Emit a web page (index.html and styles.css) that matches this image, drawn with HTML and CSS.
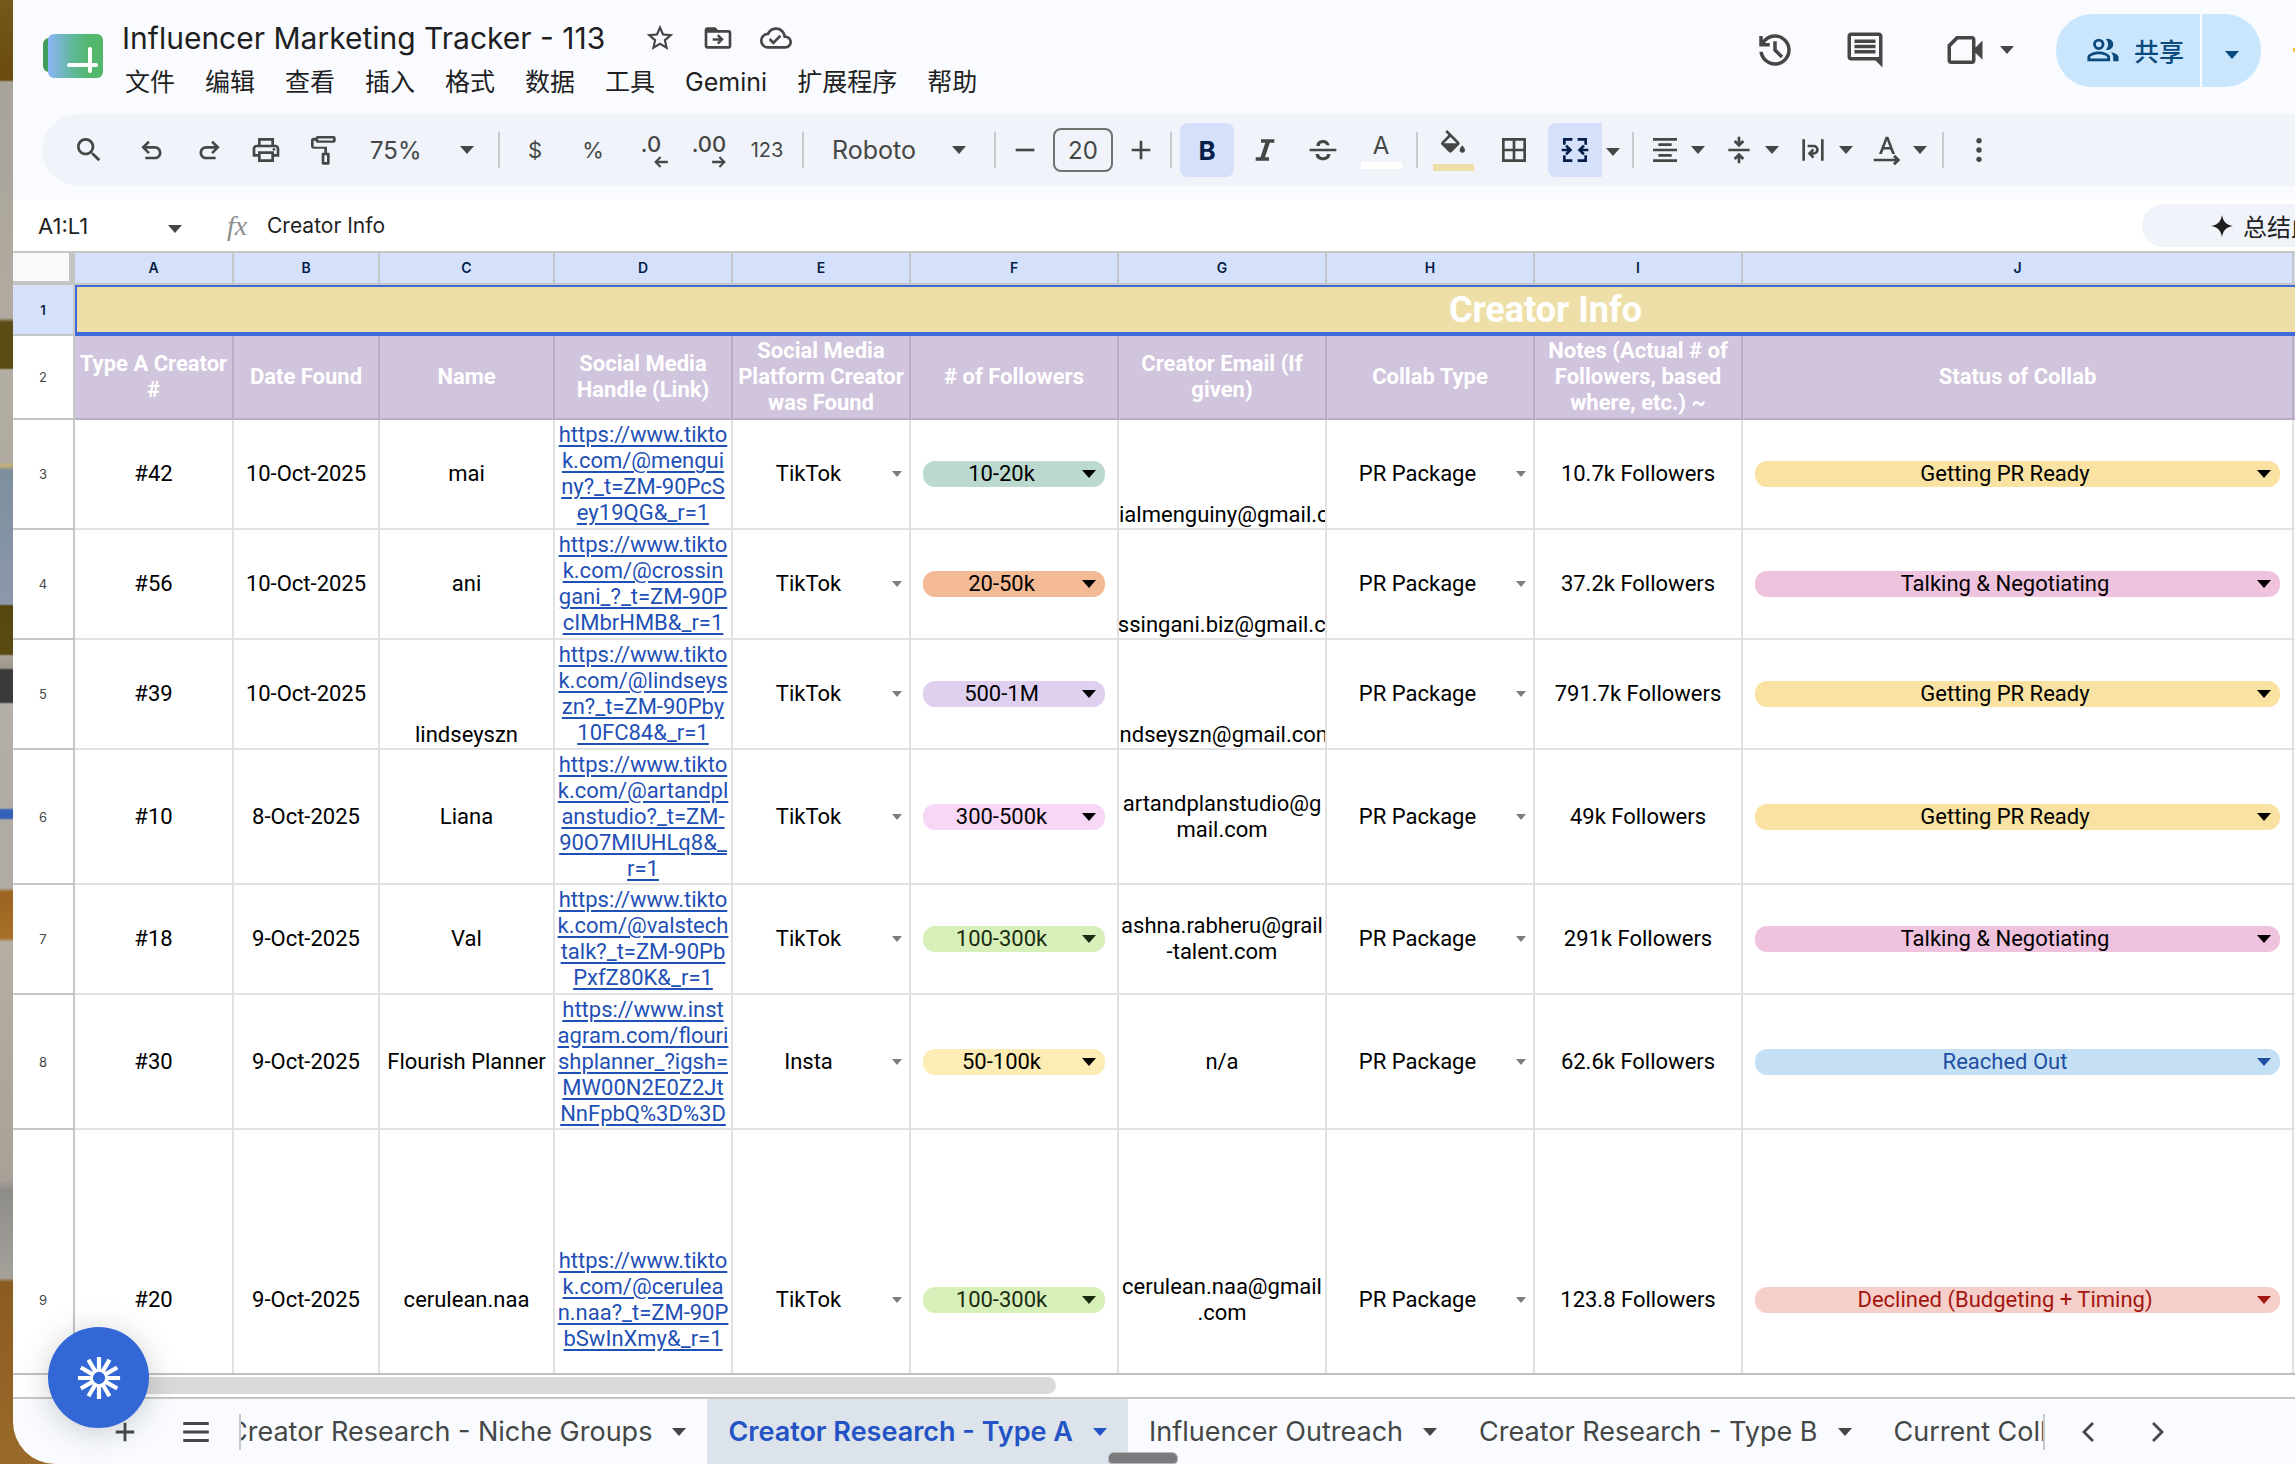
FILE: index.html
```html
<!DOCTYPE html>
<html lang="zh-CN">
<head>
    <meta charset="UTF-8">
    <meta name="viewport" content="width=device-width, initial-scale=1.0">
    <title>Influencer Marketing Tracker - 113</title>
    <link rel="stylesheet" href="styles.css">
</head>
<body>
    <div class="desktop">
    <div class="window">
        <header class="header">
            <svg class="logo" viewBox="0 0 60 44" aria-hidden="true">
                <defs>
                    <linearGradient id="logo-fill" x1="0" x2="1" y1="0" y2="0">
                        <stop offset="0" stop-color="#8ab4f8"/>
                        <stop offset="0.5" stop-color="#5cb88f"/>
                        <stop offset="0.75" stop-color="#53b86c"/>
                    </linearGradient>
                </defs>
                <rect x="0" y="4" width="30" height="34" rx="6" fill="#3f9c5c"/>
                <rect x="5" y="0" width="55" height="44" rx="6" fill="url(#logo-fill)"/>
                <path d="M26 31H53M47 15V37" stroke="#fff" stroke-width="4" stroke-linecap="round"/>
            </svg>
            <div class="title-block">
                <div class="title-row">
                    <h1>Influencer Marketing Tracker - 113</h1>
                    <button class="title-btn" aria-label="Star"><svg viewBox="0 0 24 24"><path d="M22 9.24l-7.19-.62L12 2 9.19 8.63 2 9.24l5.46 4.73L5.82 21 12 17.27 18.18 21l-1.63-7.03L22 9.24zM12 15.4l-3.76 2.27 1-4.28-3.32-2.88 4.38-.38L12 6.1l1.71 4.04 4.38.38-3.32 2.88 1 4.28L12 15.4z"/></svg></button>
                    <button class="title-btn" aria-label="Move"><svg viewBox="0 0 24 24"><path d="M20 6h-8l-2-2H4c-1.1 0-2 .9-2 2v12c0 1.100.9 2 2 2h16c1.100 0 2-.9 2-2V8c0-1.100-.9-2-2-2zm0 12H4V8h16zM12.500 9.200L11.200 10.500l1.600 1.600H8V14h4.800l-1.600 1.600 1.300 1.300L16.300 13z"/></svg></button>
                    <button class="title-btn" aria-label="Saved"><svg viewBox="0 0 24 24"><path d="M19.350 10.040C18.670 6.590 15.640 4 12 4 9.110 4 6.600 5.640 5.350 8.040 2.340 8.360 0 10.910 0 14c0 3.310 2.690 6 6 6h13c2.760 0 5-2.240 5-5 0-2.640-2.050-4.780-4.650-4.960zM19 18H6c-2.210 0-4-1.790-4-4 0-2.050 1.530-3.760 3.560-3.970l1.070-.11.5-.95C8.080 7.140 9.940 6 12 6c2.620 0 4.880 1.860 5.390 4.430l.3 1.500 1.530.11c1.560.1 2.780 1.410 2.780 2.960 0 1.650-1.350 3-3 3zm-9-3.820l-2.090-2.090L6.500 13.500 10 17l6.010-6.010-1.410-1.410z"/></svg></button>
                </div>
                <nav class="menus">
                    <button>文件</button>
                    <button>编辑</button>
                    <button>查看</button>
                    <button>插入</button>
                    <button>格式</button>
                    <button>数据</button>
                    <button>工具</button>
                    <button>Gemini</button>
                    <button>扩展程序</button>
                    <button>帮助</button>
                </nav>
            </div>
            <div class="header-actions">
                <button class="action" aria-label="History"><svg viewBox="0 0 24 24"><path d="M12 3a9 9 0 0 0-7 3.350V4H3v6h6V8H6.250A7 7 0 1 1 5.070 13H3.050A9 9 0 1 0 12 3zm-1 4v5.400l4.300 4.300 1.400-1.400-3.700-3.700V7z"/></svg></button>
                <button class="action" aria-label="Comments"><svg viewBox="0 0 24 24"><path d="M22 4c0-1.100-.9-2-2-2H4c-1.100 0-2 .9-2 2v12c0 1.100.9 2 2 2h14l4 4V4zM4 16V4h16v12zM6 12h12v2H6zM6 9h12v2H6zM6 6h12v2H6z"/></svg></button>
                <button class="action meet" aria-label="Meet">
                    <svg viewBox="0 0 24 24"><path d="M16 4H7L2 9v9c0 1.100.9 2 2 2h12c1.100 0 2-.9 2-2v-4.500l4 4v-11l-4 4V6c0-1.100-.9-2-2-2zm0 14H4V10l4-4h8z"/></svg>
                    <span class="arrow"></span>
                </button>
                <div class="share">
                    <button class="share-main">
                        <svg viewBox="0 0 24 24"><path d="M9 4a4 4 0 1 0 0 8 4 4 0 0 0 0-8zm0 2a2 2 0 1 1 0 4 2 2 0 0 1 0-4zm0 7c-2.700 0-8 1.300-8 4v3h16v-3c0-2.700-5.300-4-8-4zm-6 5v-1c0-.7 3-2 6-2s6 1.300 6 2v1zM14 4.200c1 1 1.600 2.300 1.600 3.800s-.6 2.800-1.600 3.800a4 4 0 1 0 0-7.600zM17.500 13.500c1 .9 1.700 2 1.700 3.500v3H23v-3c0-1.900-2.600-3-5.500-3.500z"/></svg>
                        共享
                    </button>
                    <button class="share-more" aria-label="Share options"><span class="arrow"></span></button>
                </div>
                <span class="spark"></span>
            </div>
        </header>

        <div class="toolbar">
            <div class="group group-main">
                <button class="tool search" aria-label="Search"><svg viewBox="0 0 24 24"><path d="M15.500 14h-.79l-.28-.27A6.500 6.500 0 1 0 13.730 14.430l.27.28v.79l5 5L20.500 19zm-6 0a4.500 4.500 0 1 1 0-9 4.500 4.500 0 0 1 0 9z"/></svg></button>
                <button class="tool" aria-label="Undo"><svg viewBox="0 0 24 24"><path d="M7 19v-2h7.100c1.600 0 3-1.200 3-3s-1.400-3-3-3H7.800l2.600 2.600L9 15 4 10l5-5 1.400 1.400L7.800 9h6.300c2.700 0 5 2.100 5 5s-2.300 5-5 5z"/></svg></button>
                <button class="tool" aria-label="Redo"><svg viewBox="0 0 24 24"><path d="M17 19v-2H9.900c-1.600 0-3-1.200-3-3s1.400-3 3-3h6.300l-2.600 2.600L15 15l5-5-5-5-1.400 1.400L16.200 9H9.900c-2.700 0-5 2.100-5 5s2.300 5 5 5z"/></svg></button>
                <button class="tool" aria-label="Print"><svg viewBox="0 0 24 24"><path d="M19 8h-1V3H6v5H5c-1.660 0-3 1.340-3 3v6h4v4h12v-4h4v-6c0-1.660-1.340-3-3-3zM8 5h8v3H8V5zm8 12v2H8v-4h8v2zm2-2v-2H6v2H4v-4c0-.55.45-1 1-1h14c.55 0 1 .45 1 1v4h-2z"/><circle cx="18" cy="11.500" r="1"/></svg></button>
                <button class="tool" aria-label="Paint format"><svg viewBox="0 0 24 24"><path d="M8 1.500c-.8 0-1.500.6-1.500 1.400H5c-1.200 0-2 .8-2 2V9c0 1.200.8 2 2 2h8v3h-1c-.6 0-1 .4-1 1v7c0 .6.4 1 1 1h4c.6 0 1-.4 1-1v-7c0-.6-.4-1-1-1h-1V9.500H5V5h1.500c0 1 .7 1.600 1.500 1.600h12c.8 0 1.500-.7 1.500-1.500V3c0-.8-.7-1.500-1.500-1.500zm.5 1.900h11v1.400h-11zM13 16h2v5h-2z"/></svg></button>
            </div>
            <div class="picker zoom-picker">
                <select aria-label="Zoom"><option>75%</option></select>
            </div>
            <span class="divider"></span>
            <div class="group">
                <button class="tool light">$</button>
                <button class="tool light">%</button>
                <button class="tool decimal" aria-label="Decrease decimals"><span>.0</span><svg viewBox="0 0 14 10"><path d="M6 0L1 5l5 5 1.300-1.300L4.600 6H13V4H4.600l2.700-2.700z"/></svg></button>
                <button class="tool decimal" aria-label="Increase decimals"><span>.00</span><svg viewBox="0 0 14 10"><path d="M8 0l5 5-5 5-1.300-1.300L9.400 6H1V4h8.400L6.700 1.300z"/></svg></button>
                <button class="tool small">123</button>
            </div>
            <span class="divider"></span>
            <div class="picker font-picker">
                <select aria-label="Font"><option>Roboto</option></select>
            </div>
            <span class="divider"></span>
            <div class="group size-group">
                <button class="tool" aria-label="Smaller"><svg viewBox="0 0 24 24"><path d="M5 11h14v2H5z"/></svg></button>
                <input type="text" value="20" aria-label="Font size">
                <button class="tool" aria-label="Larger"><svg viewBox="0 0 24 24"><path d="M5 11h6V5h2v6h6v2h-6v6h-2v-6H5z"/></svg></button>
            </div>
            <span class="divider"></span>
            <div class="group">
                <button class="tool active bold">B</button>
                <button class="tool" aria-label="Italic"><svg viewBox="0 0 24 24"><path d="M9 4h10v2.500h-3.400L12 17.500h3V20H5v-2.500h3.600l3.600-11H9z"/></svg></button>
                <button class="tool" aria-label="Strikethrough"><svg viewBox="0 0 24 24"><path d="M2 11h20v2H2zM7 9c0-3 2.300-4.500 5-4.500S16.500 6 17 8.500h-2.600C14 7.300 13.200 6.800 12 6.800c-1.500 0-2.400.7-2.400 2.200zM6.500 15H9c.2 1.700 1.400 2.400 3 2.400s3-.8 3-2.400h2.500c0 3-2.400 4.700-5.500 4.700S6.500 18 6.500 15z"/></svg></button>
                <button class="tool swatch text-color"><span>A</span></button>
            </div>
            <span class="divider"></span>
            <div class="group fill-group">
                <button class="tool swatch fill-color" aria-label="Fill color"><svg viewBox="0 0 24 24"><path d="M16.560 8.940L7.620 0 6.210 1.410l2.380 2.380-5.150 5.150a1.490 1.490 0 0 0 0 2.120l5.500 5.500c.29.29.68.44 1.060.44s.77-.15 1.060-.44l5.500-5.500c.59-.58.59-1.530 0-2.120zM5.210 10L10 5.210 14.790 10zM19 11.500s-2 2.170-2 3.500a2 2 0 0 0 4 0c0-1.330-2-3.500-2-3.500z"/></svg></button>
                <button class="tool" aria-label="Borders"><svg viewBox="0 0 24 24"><path d="M3 3v18h18V3zm8 16H5v-6h6zm0-8H5V5h6zm8 8h-6v-6h6zm0-8h-6V5h6z"/></svg></button>
                <div class="group merge">
                    <button class="tool active" aria-label="Merge"><svg viewBox="0 0 24 24"><path d="M3 3h7v2H5v3H3zM14 3h7v5h-2V5h-5zM3 16h2v3h5v2H3zM19 16h2v5h-7v-2h5zM2 11h4.200L4.600 9.400 6 8l4 4-4 4-1.400-1.400L6.200 13H2zM22 11h-4.200l1.600-1.600L18 8l-4 4 4 4 1.400-1.400-1.600-1.600H22z"/></svg></button>
                    <button class="more" aria-label="Merge options"><span class="arrow"></span></button>
                </div>
            </div>
            <span class="divider"></span>
            <div class="group">
                <button class="split" aria-label="Horizontal align"><svg viewBox="0 0 24 24"><path d="M3 3h18v2H3zM7 7h10v2H7zM3 11h18v2H3zM7 15h10v2H7zM3 19h18v2H3z"/></svg><span class="arrow"></span></button>
                <button class="split" aria-label="Vertical align"><svg viewBox="0 0 24 24"><path d="M4 11h16v2H4zM11 2h2v4l1.500-1.500L16 6l-4 4-4-4 1.500-1.500L11 6zM11 22h2v-4l1.500 1.500L16 18l-4-4-4 4 1.500 1.500L11 18z"/></svg><span class="arrow"></span></button>
                <button class="split" aria-label="Wrapping"><svg viewBox="0 0 24 24"><path d="M4 4h2v16H4zM18 4h2v16h-2zM8 8h4.500a3.800 3.800 0 0 1 0 7.600h-.7L13 17l-1.300 1.300-3.700-3.700 3.700-3.700L13 12.200l-1.300 1.400h.8a1.800 1.800 0 0 0 0-3.600H8z"/></svg><span class="arrow"></span></button>
                <button class="split" aria-label="Rotation"><svg viewBox="0 0 24 24"><path d="M11 2h2l5 13h-2.200l-1.200-3.300H9.400L8.200 15H6zM12 4.700L10.100 9.800h3.800zM2 18.500h16l-1.500-1.500 1.500-1.500 4 4-4 4-1.500-1.500 1.500-1.500H2z"/></svg><span class="arrow"></span></button>
            </div>
            <span class="divider"></span>
            <button class="tool" aria-label="More"><svg viewBox="0 0 24 24"><circle cx="12" cy="5" r="2"/><circle cx="12" cy="12" r="2"/><circle cx="12" cy="19" r="2"/></svg></button>
        </div>

        <div class="formula-bar">
            <input class="name-box" type="text" value="A1:L1" aria-label="Name box">
            <button class="name-more" aria-label="Named ranges"><span class="arrow"></span></button>
            <span class="fx">fx</span>
            <input class="formula" type="text" value="Creator Info" aria-label="Formula">
            <button class="summary">
                <svg viewBox="0 0 24 24"><path d="M12 0c1.200 7 4.500 10.800 12 12-7.500 1.200-10.800 5-12 12-1.200-7-4.500-10.800-12-12 7.500-1.200 10.800-5 12-12z"/></svg>
                总结此
            </button>
        </div>

        <main class="sheet">
            <table>
                <colgroup>
                    <col class="w-head"><col class="w-a"><col class="w-b"><col class="w-c"><col class="w-d"><col class="w-d">
                    <col class="w-f"><col class="w-f"><col class="w-f"><col class="w-f"><col class="w-j"><col class="w-k"><col class="w-k">
                </colgroup>
                <thead>
                    <tr>
                        <td class="corner"></td>
                        <th>A</th><th>B</th><th>C</th><th>D</th><th>E</th><th>F</th><th>G</th><th>H</th><th>I</th><th>J</th><th></th><th></th>
                    </tr>
                </thead>
                <tbody>
                    <tr class="banner">
                        <th class="num">1</th>
                        <td colspan="12">Creator Info</td>
                    </tr>
                    <tr class="fields">
                        <th class="num">2</th>
                        <td>Type A Creator<br>#</td>
                        <td>Date Found</td>
                        <td>Name</td>
                        <td>Social Media<br>Handle (Link)</td>
                        <td>Social Media<br>Platform Creator<br>was Found</td>
                        <td># of Followers</td>
                        <td>Creator Email (If<br>given)</td>
                        <td>Collab Type</td>
                        <td>Notes (Actual # of<br>Followers, based<br>where, etc.) ~</td>
                        <td>Status of Collab</td>
                        <td></td><td></td>
                    </tr>
                    <tr class="four">
                        <th class="num">3</th>
                        <td>#42</td>
                        <td>10-Oct-2025</td>
                        <td>mai</td>
                        <td><a href="#">https://www.tikto<br>k.com/@mengui<br>ny?_t=ZM-90PcS<br>ey19QG&amp;_r=1</a></td>
                        <td><div class="drop"><select aria-label="Platform"><option>TikTok</option></select></div></td>
                        <td><div class="drop chip teal"><select aria-label="Followers"><option>10-20k</option></select></div></td>
                        <td class="low"><div class="clip"><span>socialmenguiny@gmail.com</span></div></td>
                        <td><div class="drop"><select aria-label="Collab type"><option>PR Package</option></select></div></td>
                        <td>10.7k Followers</td>
                        <td><div class="drop chip yellow"><select aria-label="Status"><option>Getting PR Ready</option></select></div></td>
                        <td></td><td></td>
                    </tr>
                    <tr class="four">
                        <th class="num">4</th>
                        <td>#56</td>
                        <td>10-Oct-2025</td>
                        <td>ani</td>
                        <td><a href="#">https://www.tikto<br>k.com/@crossin<br>gani_?_t=ZM-90P<br>cIMbrHMB&amp;_r=1</a></td>
                        <td><div class="drop"><select aria-label="Platform"><option>TikTok</option></select></div></td>
                        <td><div class="drop chip orange"><select aria-label="Followers"><option>20-50k</option></select></div></td>
                        <td class="low"><div class="clip"><span>crossingani.biz@gmail.com</span></div></td>
                        <td><div class="drop"><select aria-label="Collab type"><option>PR Package</option></select></div></td>
                        <td>37.2k Followers</td>
                        <td><div class="drop chip pink"><select aria-label="Status"><option>Talking &amp; Negotiating</option></select></div></td>
                        <td></td><td></td>
                    </tr>
                    <tr class="four">
                        <th class="num">5</th>
                        <td>#39</td>
                        <td>10-Oct-2025</td>
                        <td class="low">lindseyszn</td>
                        <td><a href="#">https://www.tikto<br>k.com/@lindseys<br>zn?_t=ZM-90Pby<br>10FC84&amp;_r=1</a></td>
                        <td><div class="drop"><select aria-label="Platform"><option>TikTok</option></select></div></td>
                        <td><div class="drop chip purple"><select aria-label="Followers"><option>500-1M</option></select></div></td>
                        <td class="low"><div class="clip"><span>lindseyszn@gmail.com</span></div></td>
                        <td><div class="drop"><select aria-label="Collab type"><option>PR Package</option></select></div></td>
                        <td>791.7k Followers</td>
                        <td><div class="drop chip yellow"><select aria-label="Status"><option>Getting PR Ready</option></select></div></td>
                        <td></td><td></td>
                    </tr>
                    <tr class="five">
                        <th class="num">6</th>
                        <td>#10</td>
                        <td>8-Oct-2025</td>
                        <td>Liana</td>
                        <td><a href="#">https://www.tikto<br>k.com/@artandpl<br>anstudio?_t=ZM-<br>90O7MIUHLq8&amp;_<br>r=1</a></td>
                        <td><div class="drop"><select aria-label="Platform"><option>TikTok</option></select></div></td>
                        <td><div class="drop chip rose"><select aria-label="Followers"><option>300-500k</option></select></div></td>
                        <td>artandplanstudio@g<br>mail.com</td>
                        <td><div class="drop"><select aria-label="Collab type"><option>PR Package</option></select></div></td>
                        <td>49k Followers</td>
                        <td><div class="drop chip yellow"><select aria-label="Status"><option>Getting PR Ready</option></select></div></td>
                        <td></td><td></td>
                    </tr>
                    <tr class="four">
                        <th class="num">7</th>
                        <td>#18</td>
                        <td>9-Oct-2025</td>
                        <td>Val</td>
                        <td><a href="#">https://www.tikto<br>k.com/@valstech<br>talk?_t=ZM-90Pb<br>PxfZ80K&amp;_r=1</a></td>
                        <td><div class="drop"><select aria-label="Platform"><option>TikTok</option></select></div></td>
                        <td><div class="drop chip green"><select aria-label="Followers"><option>100-300k</option></select></div></td>
                        <td>ashna.rabheru@grail<br>-talent.com</td>
                        <td><div class="drop"><select aria-label="Collab type"><option>PR Package</option></select></div></td>
                        <td>291k Followers</td>
                        <td><div class="drop chip pink"><select aria-label="Status"><option>Talking &amp; Negotiating</option></select></div></td>
                        <td></td><td></td>
                    </tr>
                    <tr class="five">
                        <th class="num">8</th>
                        <td>#30</td>
                        <td>9-Oct-2025</td>
                        <td>Flourish Planner</td>
                        <td><a href="#">https://www.inst<br>agram.com/flouri<br>shplanner_?igsh=<br>MW00N2E0Z2Jt<br>NnFpbQ%3D%3D</a></td>
                        <td><div class="drop"><select aria-label="Platform"><option>Insta</option></select></div></td>
                        <td><div class="drop chip cream"><select aria-label="Followers"><option>50-100k</option></select></div></td>
                        <td>n/a</td>
                        <td><div class="drop"><select aria-label="Collab type"><option>PR Package</option></select></div></td>
                        <td>62.6k Followers</td>
                        <td><div class="drop chip blue"><select aria-label="Status"><option>Reached Out</option></select></div></td>
                        <td></td><td></td>
                    </tr>
                    <tr class="tall">
                        <th class="num">9</th>
                        <td>#20</td>
                        <td>9-Oct-2025</td>
                        <td>cerulean.naa</td>
                        <td><a href="#">https://www.tikto<br>k.com/@cerulea<br>n.naa?_t=ZM-90P<br>bSwInXmy&amp;_r=1</a></td>
                        <td><div class="drop"><select aria-label="Platform"><option>TikTok</option></select></div></td>
                        <td><div class="drop chip green"><select aria-label="Followers"><option>100-300k</option></select></div></td>
                        <td>cerulean.naa@gmail<br>.com</td>
                        <td><div class="drop"><select aria-label="Collab type"><option>PR Package</option></select></div></td>
                        <td>123.8 Followers</td>
                        <td><div class="drop chip red"><select aria-label="Status"><option>Declined (Budgeting + Timing)</option></select></div></td>
                        <td></td><td></td>
                    </tr>
                </tbody>
            </table>
        </main>

        <div class="scroll-track"><div class="scroll-thumb"></div></div>

        <footer class="tabs-bar">
            <button class="tab-btn" aria-label="Add sheet"><svg viewBox="0 0 24 24"><path d="M5.500 11H11V5.500h2V11h5.500v2H13v5.500h-2V13H5.500z"/></svg></button>
            <button class="tab-btn" aria-label="All sheets"><svg viewBox="0 0 24 24"><path d="M3 5h18v2H3zM3 11h18v2H3zM3 17h18v2H3z"/></svg></button>
            <span class="divider"></span>
            <div class="tabs">
                <button class="tab first">Creator Research - Niche Groups<span class="arrow"></span></button>
                <button class="tab current">Creator Research - Type A<span class="arrow"></span></button>
                <button class="tab">Influencer Outreach<span class="arrow"></span></button>
                <button class="tab">Creator Research - Type B<span class="arrow"></span></button>
                <button class="tab">Current Coll</button>
            </div>
            <span class="divider"></span>
            <div class="tab-nav">
                <button aria-label="Previous"><svg viewBox="0 0 24 24"><path d="M15.500 5l-7 7 7 7 1.400-1.400L11.300 12l5.600-5.600z"/></svg></button>
                <button aria-label="Next"><svg viewBox="0 0 24 24"><path d="M8.500 5l7 7-7 7-1.400-1.400L12.700 12 7.100 6.400z"/></svg></button>
            </div>
        </footer>

        <button class="fab" aria-label="Assistant">
            <svg viewBox="-12 -12 24 24">
                <g stroke="#fff" stroke-width="2.200">
                    <path d="M0-4V-11M0 4V11M-4 0H-11M4 0H11"/>
                    <path d="M2-3.500L5.500-9.500M-2-3.500L-5.500-9.500M2 3.500L5.500 9.500M-2 3.500L-5.500 9.500"/>
                    <path d="M3.500-2L9.500-5.500M-3.500-2L-9.500-5.500M3.500 2L9.500 5.500M-3.500 2L-9.500 5.500"/>
                    <circle r="4" fill="none" stroke-width="1.600"/>
                </g>
            </svg>
        </button>
        <div class="grabber"></div>
    </div>
    </div>
</body>
</html>
```
FILE: styles.css
```css
* {
    box-sizing: border-box;
}

body {
    margin: 0;
    font-family: Inter, "Noto Sans CJK SC", sans-serif;
    color: #1f1f1f;
}

button, input, select {
    font: inherit;
    color: inherit;
    background: none;
    border: none;
    padding: 0;
    margin: 0;
    outline: none;
}

button {
    cursor: pointer;
}

svg {
    display: block;
    fill: currentColor;
}

/* Wallpaper behind the window */
.desktop {
    height: 100vh;
    padding-left: 13px;
    overflow: hidden;
    background: linear-gradient(
        #73591a 0, #6b4a10 80px,
        #a9a49b 82px, #b0aaa0 318px,
        #5c4c14 322px, #5c4c14 368px,
        #b3aea4 370px, #b0aba1 462px,
        #c3ae74 466px, #7e8f9c 470px,
        #8b98ab 604px,
        #54480f 606px, #5a4a12 654px,
        #a8a296 656px, #9d978c 668px,
        #3a3a3a 670px, #3a3a3a 702px,
        #b5b0a7 704px, #b0aba3 808px,
        #3460b8 810px, #3460b8 818px,
        #b0aba3 820px, #b0aba3 888px,
        #9c6420 892px, #a86f2a 938px,
        #b5aea5 942px, #a9a198 1180px,
        #8e8c88 1190px, #a5a29c 1278px,
        #8a5c1f 1282px, #9a6a2a 100%);
}

.window {
    position: relative;
    display: flex;
    flex-direction: column;
    height: 100%;
    overflow: hidden;
    background: #f9fbff;
    border-bottom-left-radius: 42px;
}

.arrow {
    display: inline-block;
    flex: none;
    border: 7px solid transparent;
    border-top: 8px solid currentColor;
    border-bottom: none;
}

/* Header */
.header {
    display: flex;
    flex: none;
    height: 114px;
    padding-left: 30px;
    overflow: hidden;
}

.logo {
    flex: none;
    width: 60px;
    height: 44px;
    margin-top: 34px;
}

.title-block {
    margin-left: 19px;
    padding-top: 16px;
    white-space: nowrap;
}

.title-row {
    display: flex;
    align-items: center;
    height: 44px;
}

h1 {
    margin: 0 26px 0 0;
    font-size: 30px;
    font-weight: 400;
}

.title-btn {
    width: 58px;
    color: #444746;
}

.title-btn svg {
    width: 32px;
    height: 32px;
    margin: 0 auto;
}

.menus {
    display: flex;
    gap: 30px;
    padding-left: 3px;
    font-size: 25px;
    line-height: 44px;
}

.header-actions {
    display: flex;
    flex: none;
    align-items: center;
    height: 100px;
    margin-left: auto;
    color: #444746;
}

.action {
    display: flex;
    align-items: center;
    justify-content: center;
    width: 90px;
}

.action svg {
    width: 42px;
    height: 42px;
}

.meet {
    width: 138px;
    gap: 14px;
    margin-right: 8px;
}

.share {
    display: flex;
    gap: 2px;
    height: 73px;
    color: #0b4a7d;
    font-size: 25px;
    font-weight: 500;
}

.share-main {
    display: flex;
    align-items: center;
    gap: 14px;
    width: 144px;
    padding-left: 30px;
    background: #c9e6fd;
    border-radius: 36px 0 0 36px;
}

.share-main svg {
    width: 34px;
    height: 34px;
}

.share-more {
    width: 59px;
    background: #c9e6fd;
    border-radius: 0 36px 36px 0;
}

.spark {
    width: 2px;
    height: 4px;
    margin-left: 32px;
    background: #f6c14b;
}

/* Toolbar */
.toolbar {
    display: flex;
    flex: none;
    align-items: center;
    height: 72px;
    margin-left: 29px;
    padding-left: 20px;
    background: #f0f3f9;
    border-radius: 36px 0 0 36px;
    color: #444746;
}

.group {
    display: flex;
    align-items: center;
    gap: 4px;
}

.group-main {
    gap: 3px;
}

.tool {
    display: flex;
    align-items: center;
    justify-content: center;
    width: 54px;
    height: 54px;
    border-radius: 8px;
    font-size: 24px;
}

.tool svg, .split svg {
    width: 32px;
    height: 32px;
}

.search {
    margin-right: 6px;
}

.light {
    font-size: 22px;
}

.small {
    font-size: 20px;
}

.active {
    background: #d5e1fb;
    color: #041e49;
}

.bold {
    font-size: 26px;
    font-weight: 700;
}

.decimal {
    flex-direction: column;
    font-size: 22px;
    font-weight: 500;
    line-height: 24px;
}

.decimal svg {
    width: 16px;
    height: 12px;
    margin-left: 20px;
}

.divider {
    flex: none;
    width: 2px;
    height: 36px;
    margin: 0 8px;
    background: #c7c9cc;
}

.picker, .drop {
    display: grid;
    align-items: center;
}

.picker select, .drop select {
    grid-area: 1 / 1;
    width: 100%;
    appearance: none;
}

.picker::after, .drop::after {
    content: "";
    grid-area: 1 / 1;
    justify-self: end;
    border: 7px solid transparent;
    border-top: 8px solid currentColor;
    border-bottom: none;
    pointer-events: none;
}

.zoom-picker {
    width: 140px;
    padding: 0 16px 0 20px;
    font-size: 24px;
}

.font-picker {
    width: 174px;
    padding: 0 20px 0 20px;
    font-size: 25px;
}

.size-group {
    gap: 1px;
    margin: 0 -6px;
}

.size-group input {
    width: 60px;
    height: 44px;
    border: 2px solid #6f7271;
    border-radius: 8px;
    font-size: 24px;
    text-align: center;
}

.swatch {
    flex-direction: column;
    gap: 2px;
    line-height: 28px;
}

.swatch::after {
    content: "";
    width: 41px;
    height: 7px;
    background: #fff;
}

.fill-color::after {
    background: #eedfa9;
}

.fill-group {
    gap: 7px;
}

.merge {
    gap: 0;
}

.merge .active {
    border-radius: 8px 0 0 8px;
}

.more {
    width: 22px;
}

.split {
    display: flex;
    align-items: center;
    gap: 10px;
    width: 70px;
    padding-left: 7px;
}

/* Formula bar */
.formula-bar {
    display: flex;
    flex: none;
    align-items: center;
    height: 51px;
    margin-top: 14px;
    padding-left: 25px;
    background: #fff;
    font-size: 21px;
}

.name-box {
    width: 120px;
    font-size: 22px;
}

.name-more {
    width: 34px;
    color: #444746;
}

.fx {
    width: 40px;
    margin-left: 35px;
    color: #8b8e90;
    font-family: "Liberation Serif", serif;
    font-size: 28px;
    font-style: italic;
}

.formula {
    flex: 1;
}

.summary {
    display: flex;
    flex: none;
    align-items: center;
    gap: 10px;
    width: 153px;
    height: 43px;
    padding-left: 69px;
    overflow: hidden;
    background: #f0f3f9;
    border-radius: 22px 0 0 22px;
    font-size: 24px;
    white-space: nowrap;
}

.summary svg {
    flex: none;
    width: 22px;
    height: 22px;
}

/* Sheet */
.sheet {
    flex: 1;
    min-height: 0;
    overflow: hidden;
    background: #fff;
    border-top: 2px solid #c4c7c5;
    border-bottom: 2px solid #c0c0c0;
    font-family: Roboto, sans-serif;
    font-size: 22px;
    line-height: 26px;
    color: #000;
}

table {
    width: 3003px;
    table-layout: fixed;
    border-collapse: separate;
    border-spacing: 0;
}

.w-head { width: 62px; }
.w-a { width: 159px; }
.w-b { width: 146px; }
.w-c { width: 175px; }
.w-d { width: 178px; }
.w-f { width: 208px; }
.w-j { width: 551px; }
.w-k { width: 361px; }

td, th {
    padding: 0;
    border-right: 2px solid #e1e1e1;
    border-bottom: 2px solid #e1e1e1;
    text-align: center;
    vertical-align: middle;
    white-space: nowrap;
}

thead th {
    height: 32px;
    background: #d5e1fb;
    border-color: #c4c7c5;
    color: #041e49;
    font-family: Inter, sans-serif;
    font-size: 14px;
    font-weight: 600;
    line-height: 16px;
}

.corner {
    background: #f8f9fa;
    border-right: 6px solid #c4c4c4;
    border-bottom: 4px solid #c4c4c4;
}

.num {
    background: #fff;
    border-color: #c4c7c5;
    color: #444746;
    font-family: Inter, sans-serif;
    font-size: 13px;
    font-weight: 400;
}

.banner .num {
    background: #d5e1fb;
    color: #041e49;
    font-weight: 600;
}

.banner td {
    height: 51px;
    background: #eedfa9;
    border: 2px solid #3f6ad8;
    border-bottom-width: 4px;
    color: #fff;
    font-size: 36px;
    font-weight: 700;
    line-height: 40px;
}

.fields td {
    height: 84px;
    background: #d1c4dd;
    border-color: #b9adc4;
    color: #fff;
    font-weight: 700;
}

.four { height: 110px; }
.five { height: 135px; }
.tall { height: 342px; }

td a {
    color: #1f50b5;
    text-underline-offset: 3px;
}

.low {
    vertical-align: bottom;
}

.clip {
    display: flex;
    justify-content: center;
    overflow: hidden;
}

.drop {
    padding-right: 7px;
}

.drop::after {
    border-width: 5px;
    border-top-width: 6px;
    color: #7d7d7d;
}

.drop select {
    height: 26px;
    padding-right: 18px;
    text-align: center;
    text-align-last: center;
}

.chip {
    margin: 0 12px;
    padding-right: 9px;
    border-radius: 12px;
}

.chip::after {
    border-width: 7px;
    border-top-width: 8px;
    color: inherit;
}

.chip select {
    padding-right: 16px;
}

.teal { background: #bcd9cf; }
.orange { background: #f4b995; }
.purple { background: #e0d0f0; }
.rose { background: #f7d7f5; }
.green { background: #d7efb9; color: #1b2b12; }
.cream { background: #fdedb4; }
.yellow { background: #fae3a2; }
.pink { background: #efc3dd; }
.blue { background: #c5e0f4; color: #1f4fa3; }
.red { background: #f7cfca; color: #a3160f; }

/* Bottom bars */
.scroll-track {
    flex: none;
    height: 22px;
    padding: 2px 0 0 70px;
    background: #fff;
}

.scroll-thumb {
    width: 44%;
    height: 17px;
    background: #dadada;
    border-radius: 9px;
}

.tabs-bar {
    display: flex;
    flex: none;
    align-items: center;
    height: 67px;
    padding-left: 76px;
    border-top: 2px solid #c4c7c5;
    color: #444746;
    font-size: 27px;
}

.tabs-bar .divider {
    margin: 0;
}

.tab-btn {
    width: 71px;
}

.tab-btn:nth-child(2) {
    margin-right: 8px;
}

.tab-btn svg, .tab-nav svg {
    width: 34px;
    height: 34px;
    margin: 0 auto;
}

.tabs {
    display: flex;
    flex: 1;
    height: 100%;
    overflow: hidden;
}

.tab {
    display: flex;
    flex: none;
    align-items: center;
    gap: 20px;
    padding: 0 21px;
    white-space: nowrap;
}

.first {
    margin-left: -34px;
}

.current {
    background: #dde3eb;
    color: #2353c4;
    font-weight: 600;
}

.tab-nav {
    display: flex;
    width: 250px;
    padding-left: 6px;
}

.tab-nav button {
    width: 72px;
}

.fab {
    position: absolute;
    left: 35px;
    bottom: 36px;
    width: 101px;
    height: 101px;
    background: #3367d6;
    border-radius: 50%;
    box-shadow: 0 4px 30px rgba(60, 64, 67, 0.25);
}

.fab svg {
    width: 46px;
    height: 46px;
    margin: 0 auto;
}

.grabber {
    position: absolute;
    left: 48%;
    bottom: 0;
    width: 70px;
    height: 12px;
    background: #7a7b7e;
    border: 1px solid #b5b6b8;
    border-radius: 6px 6px 4px 4px;
}
```
